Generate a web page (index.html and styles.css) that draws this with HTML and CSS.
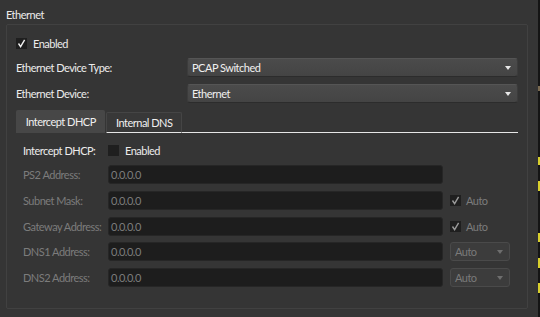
FILE: index.html
```html
<!DOCTYPE html>
<html>
<head>
<meta charset="utf-8">
<link rel="stylesheet" href="styles.css">
</head>
<body>
<div class="window">
  <div class="title">Ethernet</div>
  <div class="group">
    <div class="row check-row">
      <span class="cb checked"><svg viewBox="0 0 11 11"><path d="M2.5 5.5 L4.6 8.6 L8.6 1.8" /></svg></span>
      <span class="cb-label">Enabled</span>
    </div>
    <div class="form-grid">
      <span class="label">Ethernet Device Type:</span>
      <div class="combo"><span>PCAP Switched</span><i class="arrow"></i></div>
      <span class="label">Ethernet Device:</span>
      <div class="combo"><span>Ethernet</span><i class="arrow"></i></div>
    </div>
    <div class="tabs">
      <div class="tab active">Intercept DHCP</div>
      <div class="tab">Internal DNS</div>
      <div class="tab-rest"></div>
    </div>
    <div class="pane">
      <div class="row intercept">
        <span class="label plabel">Intercept DHCP:</span>
        <span class="cb"></span>
        <span class="cb-label">Enabled</span>
      </div>
      <div class="pgrid">
        <span class="dlabel">PS2 Address:</span>
        <div class="input">0.0.0.0</div>
        <span></span>

        <span class="dlabel">Subnet Mask:</span>
        <div class="input">0.0.0.0</div>
        <div class="auto"><span class="cb checked dis"><svg viewBox="0 0 11 11"><path d="M2.5 5.5 L4.6 8.6 L8.6 1.8" /></svg></span><span class="auto-label">Auto</span></div>

        <span class="dlabel">Gateway Address:</span>
        <div class="input">0.0.0.0</div>
        <div class="auto"><span class="cb checked dis"><svg viewBox="0 0 11 11"><path d="M2.5 5.5 L4.6 8.6 L8.6 1.8" /></svg></span><span class="auto-label">Auto</span></div>

        <span class="dlabel">DNS1 Address:</span>
        <div class="input">0.0.0.0</div>
        <div class="combo dis"><span>Auto</span><i class="arrow"></i></div>

        <span class="dlabel">DNS2 Address:</span>
        <div class="input">0.0.0.0</div>
        <div class="combo dis"><span>Auto</span><i class="arrow"></i></div>
      </div>
    </div>
  </div>
  <div class="edge">
    <i class="mark m0"></i>
    <i class="mark m1"></i>
    <i class="mark m2"></i>
    <i class="mark m3"></i>
    <i class="mark m4"></i>
    <i class="mark m5"></i>
  </div>
</div>
</body>
</html>
```
FILE: styles.css
```css
* { box-sizing: border-box; }
html, body {
  margin: 0;
  padding: 0;
  width: 540px;
  height: 317px;
  overflow: hidden;
  background: #353535;
}
body {
  font-family: "Lato", "Noto Sans", sans-serif;
  font-size: 11px;
  letter-spacing: -0.5px;
  color: #ececec;
  white-space: nowrap;
}
.window {
  position: relative;
  width: 540px;
  height: 317px;
  padding: 8px 0 0 6px;
}
.title {
  height: 16px;
  line-height: 14px;
}
.group {
  width: 522px;
  height: 285px;
  border: 1px solid #414141;
  border-radius: 2px;
  padding: 9px 9px 0 9px;
}
.row {
  display: flex;
  align-items: center;
  height: 19px;
}
.check-row { margin-bottom: 5px; }
.cb {
  width: 11px;
  height: 11px;
  background: #1f1f1f;
  display: inline-flex;
  flex: none;
}
.cb svg { width: 11px; height: 11px; }
.cb svg path {
  fill: none;
  stroke: #f0f0f0;
  stroke-width: 1.4;
}
.cb.dis svg path { stroke: #9a9a9a; }
.cb-label { margin-left: 6px; }
.form-grid {
  display: grid;
  grid-template-columns: 171px 331px;
  grid-auto-rows: 19px;
  row-gap: 7px;
  align-items: center;
}
.combo {
  height: 19px;
  display: flex;
  align-items: center;
  justify-content: space-between;
  padding: 0 6px 0 4px;
  background: linear-gradient(#4b4b4b, #444444);
  border: 1px solid #3c3c3c;
  border-top-color: #555;
  border-bottom-color: #2c2c2c;
  border-radius: 3px;
  color: #f0f0f0;
}
.arrow {
  width: 0;
  height: 0;
  border-left: 3.5px solid transparent;
  border-right: 3.5px solid transparent;
  border-top: 4px solid #e8e8e8;
}
.combo.dis {
  background: #3c3c3c;
  border: 1px solid #4a4a4a;
  color: #7a7a7a;
  width: 60px;
}
.combo.dis .arrow { border-top-color: #6e6e6e; }
.tabs {
  display: flex;
  align-items: flex-end;
  height: 23px;
  margin-top: 7px;
}
.tab {
  height: 21px;
  width: 76px;
  margin-left: 1px;
  display: flex;
  align-items: center;
  justify-content: center;
  background: #383838;
  border: 1px solid #454545;
  border-bottom: 1px solid #e6e6e6;
  border-radius: 2px 2px 0 0;
  color: #f0f0f0;
}
.tab.active {
  height: 23px;
  width: 90px;
  margin-left: 0;
  background: #474747;
  border: none;
}
.tab-rest {
  flex: none;
  width: 336px;
  border-bottom: 1px solid #e6e6e6;
}
.pane {
  padding: 8px 0 0 7px;
}
.plabel { width: 85px; }
.intercept { margin-bottom: 5px; }
.pgrid {
  display: grid;
  grid-template-columns: 85px 335px 67px;
  grid-auto-rows: 19px;
  row-gap: 6.75px;
  align-items: center;
}
.dlabel { color: #7c7c7c; }
.input {
  height: 19px;
  background: #1d1d1d;
  border: 1px solid #262626;
  border-radius: 3px;
  color: #7c7c7c;
  padding: 0 2px;
  display: flex;
  align-items: center;
}
.pgrid > :nth-child(3n) { margin-left: 7px; }
.auto { display: flex; align-items: center; }
.auto-label { margin-left: 5px; color: #7c7c7c; }
.edge {
  position: absolute;
  right: 0;
  top: 0;
  width: 2px;
  height: 317px;
  background: #141414;
}
.mark { position: absolute; left: 0; width: 2px; background: #d8cf2c; }
.m0 { top: 86px; height: 5px; background: #7a6a50; }
.m1 { top: 157px; height: 8px; }
.m2 { top: 181px; height: 10px; }
.m3 { top: 233px; height: 9px; }
.m4 { top: 258px; height: 10px; }
.m5 { top: 283px; height: 10px; }
```
